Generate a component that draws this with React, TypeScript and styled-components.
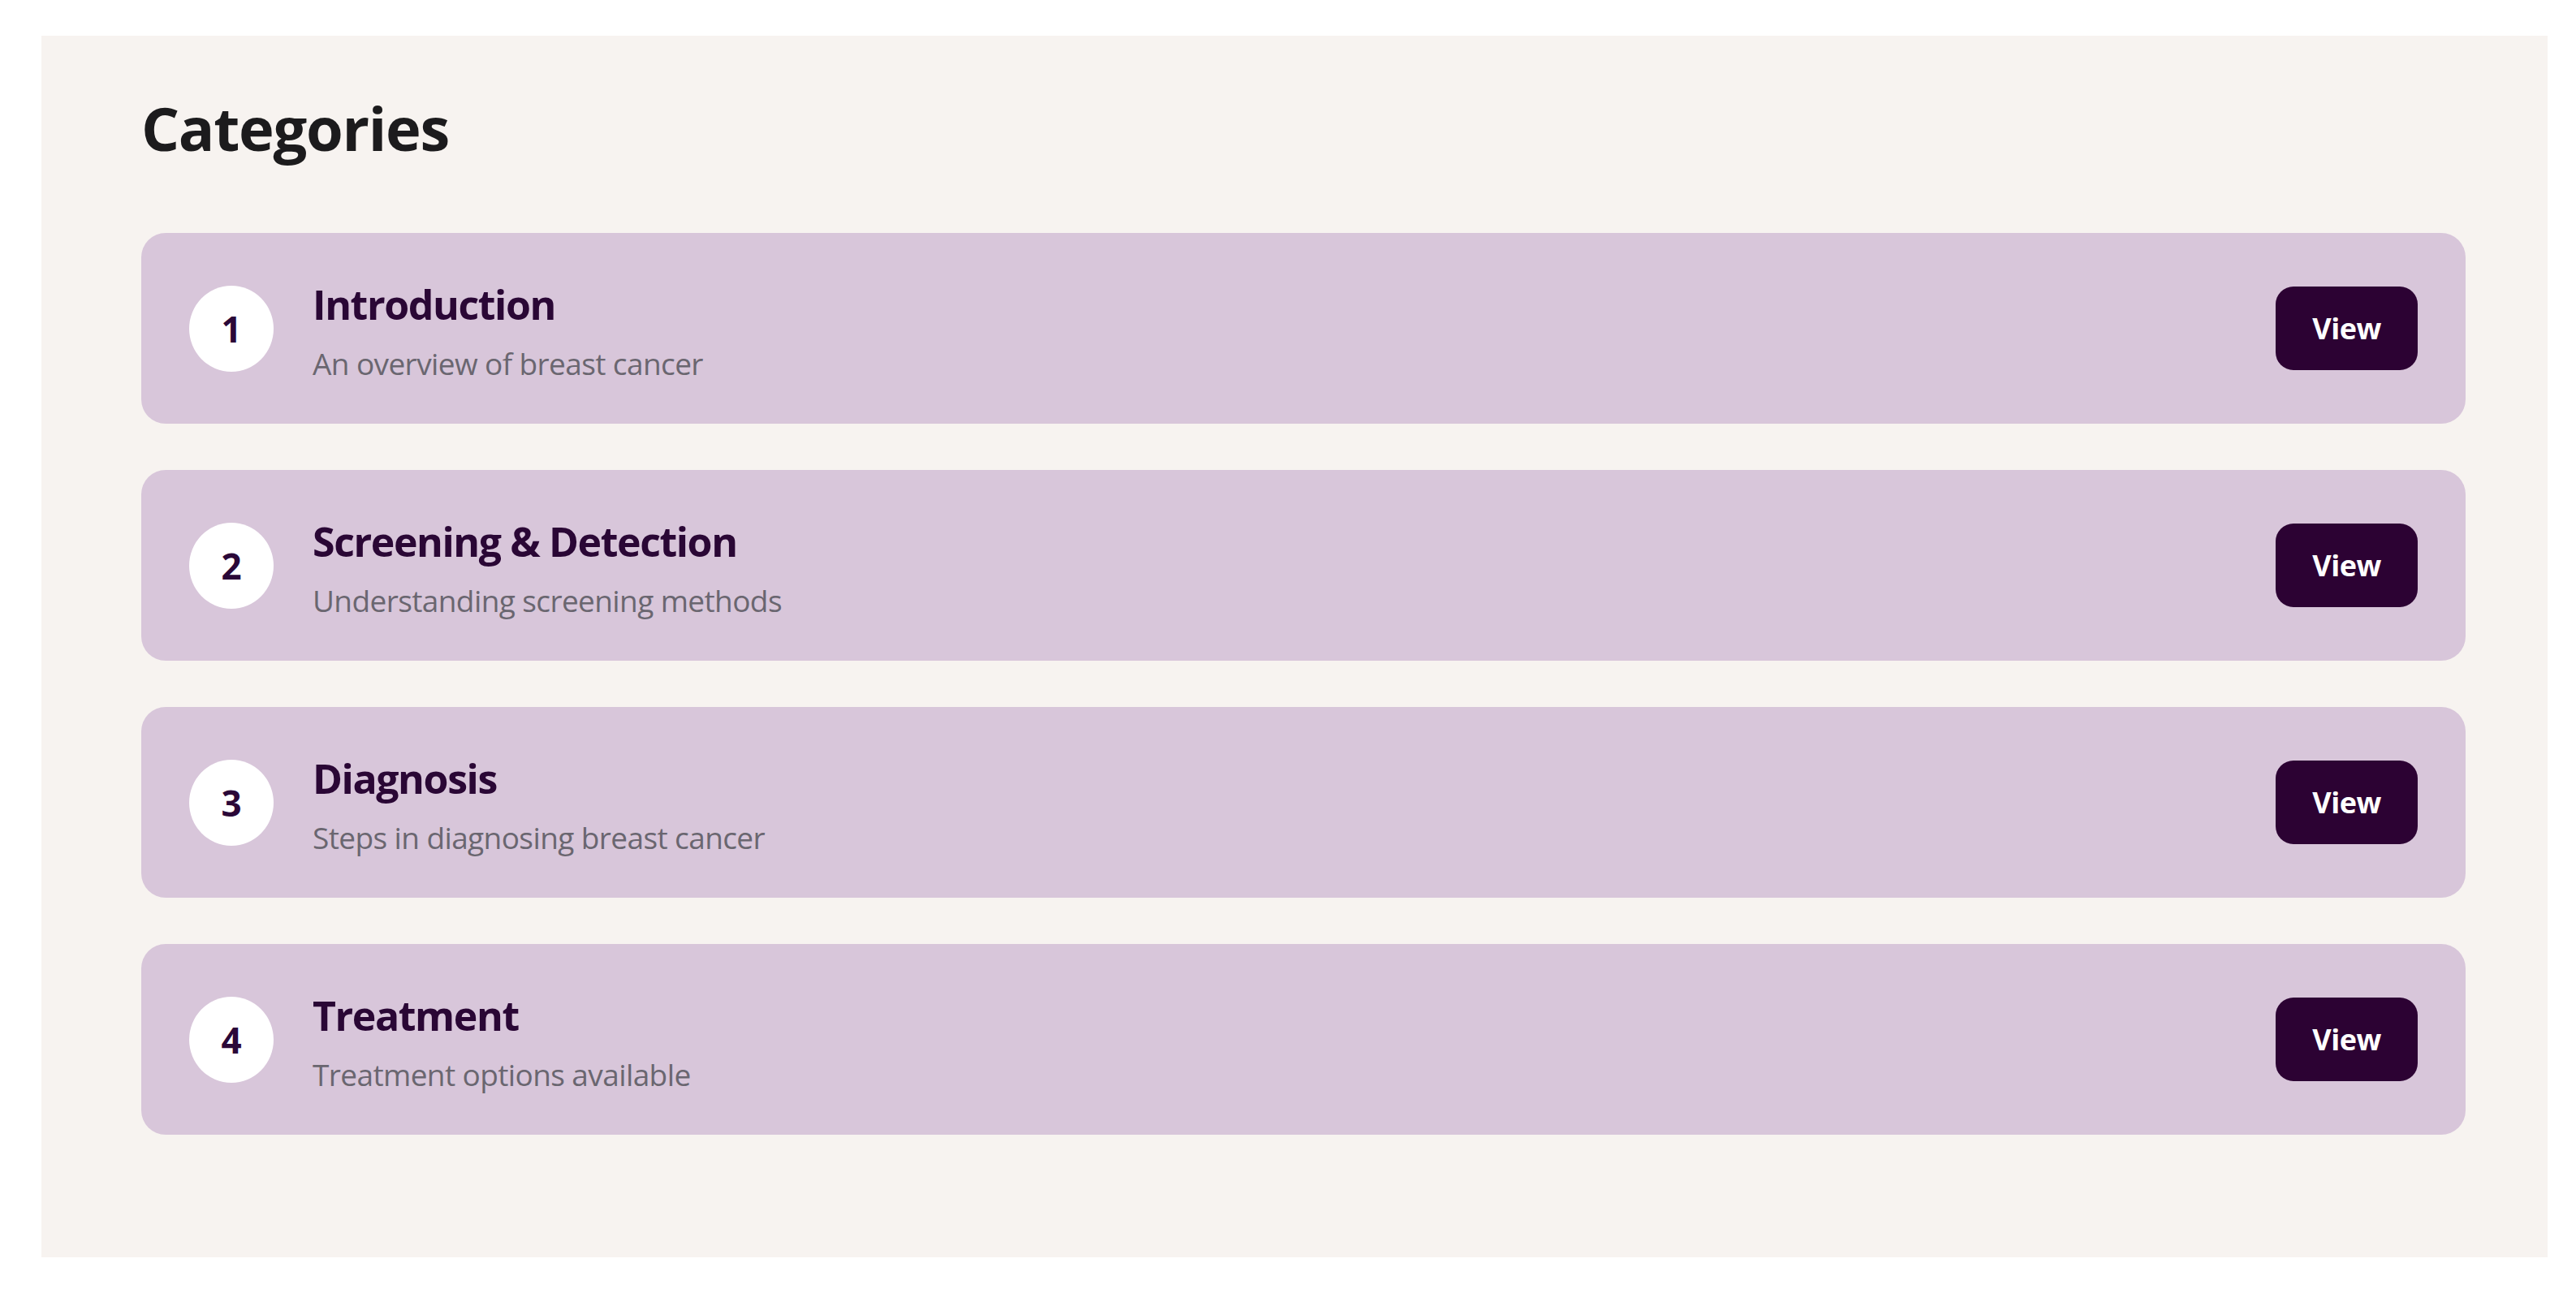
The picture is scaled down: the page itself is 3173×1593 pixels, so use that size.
import React from "react";
import styled, { createGlobalStyle } from "styled-components";

const GlobalStyle = createGlobalStyle`
  html, body {
    margin: 0;
    padding: 0;
    background: #ffffff;
  }
  body {
    font-family: "Open Sans", "Noto Sans", sans-serif;
  }
`;

const Page = styled.div`
  width: 3173px;
  min-height: 1593px;
  box-sizing: border-box;
  padding: 44px 35px 44px 51px;
  display: flex;
  align-items: flex-start;
`;

const Panel = styled.section`
  flex: 1;
  height: 1505px;
  background: #f7f3f0;
  box-sizing: border-box;
  padding: 77px 101px 0 123px;
  display: flex;
  flex-direction: column;
`;

const Heading = styled.h2`
  margin: 0 0 92px 0;
  font-family: "Open Sans", sans-serif;
  font-weight: 700;
  font-size: 74px;
  line-height: 74px;
  letter-spacing: -1.3px;
  color: #1c1b1d;
`;

const List = styled.div`
  display: flex;
  flex-direction: column;
  gap: 57px;
`;

const Card = styled.div`
  height: 235px;
  box-sizing: border-box;
  background: #d8c6da;
  border-radius: 30px;
  padding: 0 59px;
  display: flex;
  align-items: center;
`;

const Badge = styled.div`
  width: 104px;
  height: 106px;
  border-radius: 50%;
  background: #ffffff;
  flex: 0 0 auto;
  display: flex;
  align-items: center;
  justify-content: center;
  font-family: "Open Sans", sans-serif;
  font-weight: 700;
  font-size: 44px;
  color: #2b0838;
  margin-right: 48px;
`;

const Texts = styled.div`
  flex: 1;
  display: flex;
  flex-direction: column;
  gap: 18px;
  padding-top: 9px;
`;

const Title = styled.div`
  font-family: "Open Sans", sans-serif;
  font-weight: 700;
  font-size: 50px;
  line-height: 60px;
  letter-spacing: -1.4px;
  color: #2a0735;
`;

const Subtitle = styled.div`
  font-family: "Open Sans", sans-serif;
  font-weight: 400;
  font-size: 37px;
  line-height: 50px;
  letter-spacing: -0.6px;
  color: #6a6670;
`;

const ViewButton = styled.button`
  flex: 0 0 auto;
  width: 175px;
  height: 103px;
  border: none;
  border-radius: 22px;
  background: #2c0233;
  color: #ffffff;
  font-family: "Open Sans", sans-serif;
  font-weight: 700;
  font-size: 36px;
  letter-spacing: -0.5px;
  cursor: pointer;
  display: flex;
  align-items: center;
  justify-content: center;
  padding: 0;
`;

const categories = [
  { n: 1, title: "Introduction", desc: "An overview of breast cancer" },
  { n: 2, title: "Screening & Detection", desc: "Understanding screening methods" },
  { n: 3, title: "Diagnosis", desc: "Steps in diagnosing breast cancer" },
  { n: 4, title: "Treatment", desc: "Treatment options available" },
];

export default function App() {
  return (
    <>
      <GlobalStyle />
      <Page>
        <Panel>
          <Heading>Categories</Heading>
          <List>
            {categories.map((c) => (
              <Card key={c.n}>
                <Badge>{c.n}</Badge>
                <Texts>
                  <Title>{c.title}</Title>
                  <Subtitle>{c.desc}</Subtitle>
                </Texts>
                <ViewButton>View</ViewButton>
              </Card>
            ))}
          </List>
        </Panel>
      </Page>
    </>
  );
}
